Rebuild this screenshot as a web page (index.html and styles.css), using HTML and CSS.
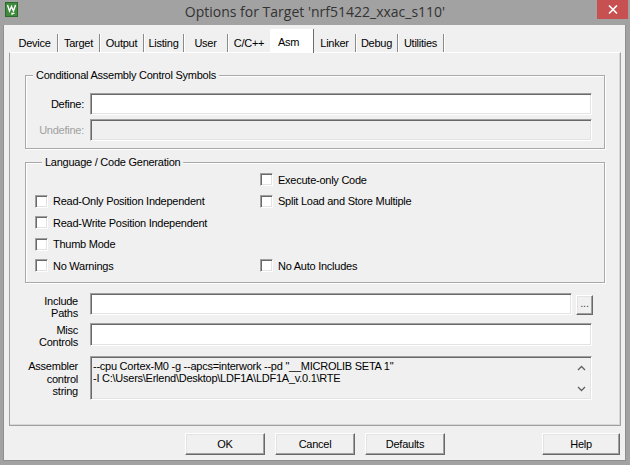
FILE: index.html
```html
<!DOCTYPE html>
<html>
<head>
<meta charset="utf-8">
<link rel="stylesheet" href="styles.css">
</head>
<body>
<div class="window">
  <div class="titlebar">
    <div class="app-icon">
      <svg width="13" height="15" viewBox="0 0 13 15">
        <rect x="0" y="0" width="13" height="15" fill="#3f8a3c"/>
        <rect x="0.5" y="0.5" width="12" height="14" fill="none" stroke="#2a6a2a"/>
        <path d="M2.5 3 L4.5 9 L6.5 4.5 L8.5 9 L10.5 3" fill="none" stroke="#fff" stroke-width="1.4"/>
        <path d="M7 10.5 L7 13 M7 11.5 L9.5 11.5" fill="none" stroke="#fff" stroke-width="1.2"/>
      </svg>
    </div>
    <div class="title">Options for Target 'nrf51422_xxac_s110'</div>
    <div class="close">
      <svg width="10" height="9" viewBox="0 0 10 9">
        <path d="M1 0.5 L9 8.5 M9 0.5 L1 8.5" stroke="#fff" stroke-width="1.6"/>
      </svg>
    </div>
  </div>

  <div class="client">
    <div class="tabs">
      <div class="tab">Device</div>
      <div class="tab">Target</div>
      <div class="tab">Output</div>
      <div class="tab">Listing</div>
      <div class="tab">User</div>
      <div class="tab before-active">C/C++</div>
      <div class="tab active">Asm</div>
      <div class="tab">Linker</div>
      <div class="tab">Debug</div>
      <div class="tab">Utilities</div>
    </div>

    <div class="panel">
      <div class="group group-symbols">
        <div class="group-title">Conditional Assembly Control Symbols</div>
        <div class="symbol-grid">
          <label class="field-label">Define:</label>
          <div class="edit"></div>
          <label class="field-label disabled">Undefine:</label>
          <div class="edit edit-disabled"></div>
        </div>
      </div>

      <div class="group group-lang">
        <div class="group-title">Language / Code Generation</div>
        <div class="check-grid">
          <div class="cell"></div>
          <div class="check"><span class="box"></span><span>Execute-only Code</span></div>
          <div class="check"><span class="box"></span><span>Read-Only Position Independent</span></div>
          <div class="check"><span class="box"></span><span>Split Load and Store Multiple</span></div>
          <div class="check"><span class="box"></span><span>Read-Write Position Independent</span></div>
          <div class="cell"></div>
          <div class="check"><span class="box"></span><span>Thumb Mode</span></div>
          <div class="cell"></div>
          <div class="check"><span class="box"></span><span>No Warnings</span></div>
          <div class="check"><span class="box"></span><span>No Auto Includes</span></div>
        </div>
      </div>

      <div class="lower-grid">
        <div class="side-label lbl-include">Include<br>Paths</div>
        <div class="include-row">
          <div class="edit"></div>
          <div class="browse">...</div>
        </div>
        <div class="side-label lbl-misc">Misc<br>Controls</div>
        <div class="edit edit-misc"></div>
        <div class="side-label lbl-asm">Assembler<br>control<br>string</div>
        <div class="memo">
          <div class="memo-text">--cpu Cortex-M0 -g --apcs=interwork --pd "__MICROLIB SETA 1"<br>-I C:\Users\Erlend\Desktop\LDF1A\LDF1A_v.0.1\RTE</div>
          <div class="memo-scroll">
            <svg width="9" height="6" viewBox="0 0 9 6"><path d="M1 5 L4.5 1.5 L8 5" fill="none" stroke="#606060" stroke-width="1.3"/></svg>
            <svg width="9" height="6" viewBox="0 0 9 6"><path d="M1 1 L4.5 4.5 L8 1" fill="none" stroke="#606060" stroke-width="1.3"/></svg>
          </div>
        </div>
      </div>
    </div>

    <div class="buttons">
      <div class="btn">OK</div>
      <div class="btn">Cancel</div>
      <div class="btn">Defaults</div>
      <div class="btn btn-help">Help</div>
    </div>
  </div>
</div>
</body>
</html>
```

FILE: styles.css
```css
* { box-sizing: border-box; }
html, body { margin: 0; padding: 0; }
body {
  width: 630px;
  height: 465px;
  overflow: hidden;
  font-family: "Liberation Sans", Arial, sans-serif;
  font-size: 11px;
  letter-spacing: -0.25px;
  color: #000;
  background: #a2a2a2;
}
.window {
  width: 630px;
  height: 465px;
  display: flex;
  flex-direction: column;
  background: #a2a2a2;
}
.titlebar {
  height: 25px;
  flex: none;
  display: grid;
  grid-template-columns: 1fr auto 1fr;
  align-items: start;
}
.app-icon {
  justify-self: start;
  margin: 2px 0 0 5px;
  height: 15px;
}
.app-icon svg { display: block; }
.title {
  font-family: "Open Sans", "Noto Sans", sans-serif;
  font-size: 14px;
  letter-spacing: 0;
  line-height: 24px;
  color: #333;
  white-space: nowrap;
}
.close {
  justify-self: end;
  width: 31px;
  height: 19px;
  margin-right: 2px;
  background: #c75050;
  display: flex;
  align-items: center;
  justify-content: center;
}
.close svg { display: block; }

.client {
  flex: 1;
  margin: 0 4px 4px 3px;
  background: #f0f0f0;
  box-shadow: inset 1px 0 #8f8f8f, inset -1px 0 #8f8f8f, inset 0 -1px #8f8f8f;
  display: flex;
  flex-direction: column;
  padding: 4px 5px 0 6px;
}

/* tabs */
.tabs {
  display: flex;
  align-items: flex-end;
  height: 23px;
  padding-left: 3px;
  position: relative;
  z-index: 1;
}
.tab {
  height: 18px;
  line-height: 18px;
  text-align: center;
  border-right: 1px solid #8a8a8a;
  box-shadow: 1px 0 0 #fff;
  white-space: nowrap;
}
.tab:nth-child(1) { width: 46px; }
.tab:nth-child(2) { width: 42px; }
.tab:nth-child(3) { width: 44px; }
.tab:nth-child(4) { width: 40px; }
.tab:nth-child(5) { width: 44px; }
.tab:nth-child(6) { width: 42px; }
.tab:nth-child(7) { width: 44px; }
.tab:nth-child(8) { width: 42px; }
.tab:nth-child(9) { width: 42px; }
.tab:nth-child(10) { width: 46px; }
.tab.before-active { border-right: none; box-shadow: none; }
.tab.active {
  height: 24px;
  margin-bottom: -1px;
  line-height: 18px;
  padding-top: 4px;
  padding-right: 6px;
  background: #fff;
  border-right: 1px solid #6d6d6d;
  box-shadow: none;
}

/* panel */
.panel {
  height: 374px;
  flex: none;
  border: 1px solid #a0a0a0;
  border-top-color: #fff;
  box-shadow: inset -1px -1px 0 #d8d8d8;
  padding: 22px 15px 0 15px;
  display: flex;
  flex-direction: column;
}

.group {
  border: 1px solid #a9a9a9;
  box-shadow: inset 1px 1px 0 #fff, 1px 1px 0 #fff;
}
.group-title {
  margin: -7px 0 0 7px;
  padding: 0 3px;
  width: fit-content;
  line-height: 13px;
  background: #f0f0f0;
  white-space: nowrap;
}
.group-symbols {
  height: 74px;
  padding-right: 12px;
}
.symbol-grid {
  margin-top: 11px;
  display: grid;
  grid-template-columns: 58px 1fr;
  column-gap: 6px;
  row-gap: 4px;
  grid-auto-rows: 22px;
  align-items: center;
}
.field-label {
  text-align: right;
  white-space: nowrap;
}
.field-label.disabled { color: #a0a0a0; }

.edit {
  height: 22px;
  background: #fff;
  border: 1px solid;
  border-color: #a0a0a0 #fff #fff #a0a0a0;
  box-shadow: inset 1px 1px 0 #696969, inset -1px -1px 0 #e3e3e3;
}
.edit-disabled { background: #f0f0f0; }

.group-lang {
  margin-top: 13px;
  height: 121px;
  padding-left: 9px;
}
.check-grid {
  display: grid;
  grid-template-columns: 225px 1fr;
  grid-template-rows: 21px 22px 21px 22px 21px;
  align-items: center;
}
.check {
  display: flex;
  align-items: center;
  gap: 5px;
  white-space: nowrap;
}
.box {
  width: 13px;
  height: 13px;
  flex: none;
  background: #fff;
  border: 1px solid;
  border-color: #a0a0a0 #fff #fff #a0a0a0;
  box-shadow: inset 1px 1px 0 #696969, inset -1px -1px 0 #e3e3e3;
}

.lower-grid {
  margin-top: 10px;
  padding-right: 12px;
  display: grid;
  grid-template-columns: 53px 1fr;
  column-gap: 12px;
  grid-template-rows: 30px 33px 44px;
  align-items: start;
}
.side-label {
  text-align: right;
  line-height: 12px;
  white-space: nowrap;
}
.lbl-include { margin-top: 2px; }
.lbl-misc { margin-top: 1px; }
.lbl-asm { margin-top: 4px; line-height: 12.5px; }

.include-row {
  display: flex;
  align-items: flex-end;
  gap: 4px;
}
.include-row .edit { flex: 1; }
.browse {
  width: 17px;
  height: 20px;
  background: #f0f0f0;
  border: 1px solid;
  border-color: #fff #696969 #696969 #fff;
  box-shadow: inset -1px -1px 0 #a0a0a0, inset 1px 1px 0 #e3e3e3;
  text-align: center;
  line-height: 14px;
  color: #444;
}
.edit-misc { height: 23px; margin-right: 1px; }

.memo {
  height: 44px;
  margin-right: 1px;
  display: flex;
  background: #f0f0f0;
  border: 1px solid;
  border-color: #a0a0a0 #fff #fff #a0a0a0;
  box-shadow: inset 1px 1px 0 #696969, inset -1px -1px 0 #e3e3e3;
}
.memo-text {
  flex: 1;
  padding: 3px 0 0 2px;
  line-height: 12px;
  white-space: nowrap;
  overflow: hidden;
}
.memo-scroll {
  width: 17px;
  display: flex;
  flex-direction: column;
  justify-content: space-between;
  align-items: center;
  padding: 8px 2px 7px 0;
}
.memo-scroll svg { display: block; }

/* buttons */
.buttons {
  margin-top: 7px;
  display: flex;
  gap: 10px;
  padding-left: 176px;
  padding-right: 1px;
}
.btn {
  width: 80px;
  height: 22px;
  line-height: 20px;
  text-align: center;
  background: #f0f0f0;
  border: 1px solid;
  border-color: #fff #696969 #696969 #fff;
  box-shadow: inset -1px -1px 0 #a0a0a0, inset 1px 1px 0 #e3e3e3;
}
.btn-help {
  margin-left: auto;
  width: 78px;
}
```
